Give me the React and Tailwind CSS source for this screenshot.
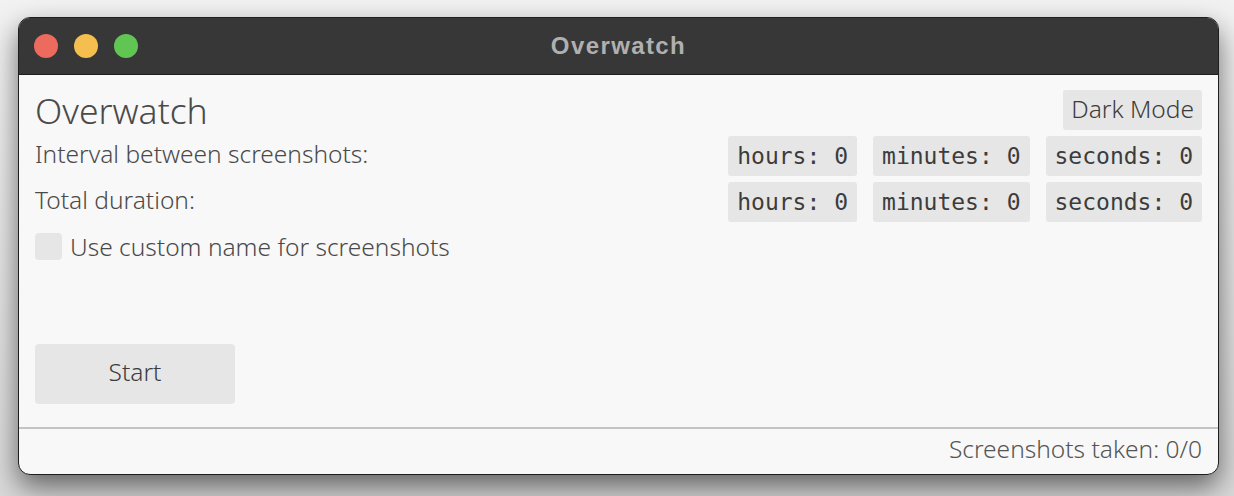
import { useState } from "react";

const ui = { fontFamily: '"Noto Sans", "Open Sans", sans-serif' };
const mono = { fontFamily: '"DejaVu Sans Mono", "Liberation Mono", monospace' };

function TimeBox({ label }){
  return(
    <div className="h-[40px] px-[9px] flex items-center bg-[#e6e6e6] rounded-[3px] text-[23px] text-[#3c3c3c]" style={mono}>
      {label}: 0
    </div>
  );
}

function TimeRow({ title }){
  return(
    <div className="h-[40px] flex items-center justify-between">
      <span className="pb-[3px] text-[24.5px] font-light text-[#4a4a4a]">{title}</span>
      <div className="flex gap-[16px]">
        <TimeBox label="hours" />
        <TimeBox label="minutes" />
        <TimeBox label="seconds" />
      </div>
    </div>
  );
}

export default function App(){

  const [custom,setCustom] = useState(false);

  return(

    <div className="w-[1234px] h-[496px] overflow-hidden bg-gradient-to-b from-[#f2f2f2] to-[#d9d9d9] pt-[17px] pl-[18px]" style={ui}>

      {/* WINDOW */}
      <div className="w-[1201px] h-[458px] flex flex-col rounded-[12px] overflow-hidden border border-[#1e1e1e] bg-[#f8f8f8] shadow-[0_12px_28px_rgba(0,0,0,0.55)]">

        {/* TITLE BAR */}
        <div className="relative h-[57px] shrink-0 bg-[#373737] border-b border-[#1e1e1e] flex items-center pl-[15px] gap-[16px]">
          <span className="w-[24px] h-[24px] rounded-full bg-[#ec6a5e]" />
          <span className="w-[24px] h-[24px] rounded-full bg-[#f4bf4f]" />
          <span className="w-[24px] h-[24px] rounded-full bg-[#61c554]" />
          <span className="absolute inset-0 flex items-center justify-center text-[24px] tracking-[1.4px] font-bold text-[#b0b0b0]" style={{fontFamily:'"Liberation Sans", Roboto, sans-serif'}}>
            Overwatch
          </span>
        </div>

        {/* CONTENT */}
        <div className="flex-1 flex flex-col px-[16px] pt-[15px]">

          <div className="h-[40px] flex items-center justify-between">
            <h1 className="text-[35.5px] font-light leading-[36px] text-[#4a4a4a]">Overwatch</h1>
            <button className="h-[40px] px-[8px] pb-[2px] bg-[#e6e6e6] rounded-[3px] text-[24.5px] font-light text-[#3c3c3c]">
              Dark Mode
            </button>
          </div>

          <div className="mt-[6px] flex flex-col gap-[6px]">
            <TimeRow title="Interval between screenshots:" />
            <TimeRow title="Total duration:" />
          </div>

          <label className="mt-[9px] h-[30px] flex items-center gap-[8px] cursor-pointer">
            <span
              onClick={()=>setCustom(!custom)}
              className="w-[27px] h-[27px] rounded-[4px] bg-[#e6e6e6]"
            />
            <span className="text-[24.5px] font-light text-[#4a4a4a] leading-[27px]">Use custom name for screenshots</span>
          </label>

          <button className="mt-[83px] w-[200px] h-[60px] pb-[3px] bg-[#e6e6e6] rounded-[4px] text-[24.5px] font-light text-[#3c3c3c]">
            Start
          </button>

        </div>

        {/* STATUS BAR */}
        <div className="h-[47px] shrink-0 pb-[5px] border-t-2 border-[#c4c4c4] flex items-center justify-end pr-[16px]">
          <span className="text-[24.5px] font-light text-[#555555]">Screenshots taken: 0/0</span>
        </div>

      </div>

    </div>

  );

}
